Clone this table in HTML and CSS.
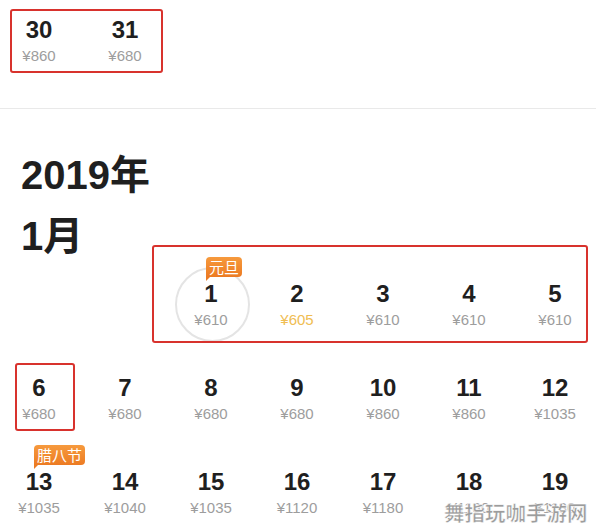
FILE: index.html
```html
<!DOCTYPE html>
<html lang="zh-CN">
<head>
    <meta charset="UTF-8">
    <meta name="viewport" content="width=device-width, initial-scale=1.0">
    <title>价格日历</title>
    <link rel="stylesheet" href="styles.css">
</head>
<body>
    <div class="page">
        <div class="bg-digit">1</div>

        <div class="days days-prev">
            <div class="day"><div class="tag-slot"></div><div class="num">30</div><div class="price">¥860</div></div>
            <div class="day"><div class="tag-slot"></div><div class="num">31</div><div class="price">¥680</div></div>
        </div>

        <div class="divider"></div>

        <div class="month">
            <h2 class="month-title">2019年<br>1月</h2>
            <div class="days">
                <div class="day empty"></div>
                <div class="day empty"></div>
                <div class="day today">
                    <div class="tag-slot"><span class="tag">元旦</span></div>
                    <div class="body"><div class="num">1</div><div class="price">¥610</div></div>
                </div>
                <div class="day"><div class="tag-slot"></div><div class="num">2</div><div class="price low">¥605</div></div>
                <div class="day"><div class="tag-slot"></div><div class="num">3</div><div class="price">¥610</div></div>
                <div class="day"><div class="tag-slot"></div><div class="num">4</div><div class="price">¥610</div></div>
                <div class="day"><div class="tag-slot"></div><div class="num">5</div><div class="price">¥610</div></div>

                <div class="day"><div class="tag-slot"></div><div class="num">6</div><div class="price">¥680</div></div>
                <div class="day"><div class="tag-slot"></div><div class="num">7</div><div class="price">¥680</div></div>
                <div class="day"><div class="tag-slot"></div><div class="num">8</div><div class="price">¥680</div></div>
                <div class="day"><div class="tag-slot"></div><div class="num">9</div><div class="price">¥680</div></div>
                <div class="day"><div class="tag-slot"></div><div class="num">10</div><div class="price">¥860</div></div>
                <div class="day"><div class="tag-slot"></div><div class="num">11</div><div class="price">¥860</div></div>
                <div class="day"><div class="tag-slot"></div><div class="num">12</div><div class="price">¥1035</div></div>

                <div class="day"><div class="tag-slot"><span class="tag">腊八节</span></div><div class="num">13</div><div class="price">¥1035</div></div>
                <div class="day"><div class="tag-slot"></div><div class="num">14</div><div class="price">¥1040</div></div>
                <div class="day"><div class="tag-slot"></div><div class="num">15</div><div class="price">¥1035</div></div>
                <div class="day"><div class="tag-slot"></div><div class="num">16</div><div class="price">¥1120</div></div>
                <div class="day"><div class="tag-slot"></div><div class="num">17</div><div class="price">¥1180</div></div>
                <div class="day"><div class="tag-slot"></div><div class="num">18</div><div class="price">¥1180</div></div>
                <div class="day"><div class="tag-slot"></div><div class="num">19</div><div class="price">¥1180</div></div>
            </div>
        </div>

        <!-- red annotation boxes -->
        <div class="mark mark-prev"></div>
        <div class="mark mark-week"></div>
        <div class="mark mark-six"></div>

        <div class="watermark">舞指玩咖手游网</div>
    </div>
</body>
</html>
```

FILE: styles.css
```css
html, body {
    margin: 0;
    background: #fff;
}
body {
    font-family: "Liberation Sans", "Noto Sans CJK SC", sans-serif;
    color: #222;
    overflow: hidden;
}
.page {
    position: relative;
    width: 596px;
    height: 531px;
    overflow: hidden;
}
.days {
    display: grid;
    grid-template-columns: repeat(7, 86px);
    row-gap: 21px;
    margin-left: -4px;
}
.days-prev {
    margin-top: -7px;
}
.day {
    text-align: center;
}
.tag-slot {
    height: 20px;
    margin-bottom: 2px;
    padding-left: calc(50% - 5px);
    text-align: left;
    white-space: nowrap;
}
.num {
    font-size: 24px;
    font-weight: bold;
    line-height: 30px;
    color: #1f1f1f;
}
.price {
    margin-top: 1px;
    font-size: 15px;
    line-height: 20px;
    color: #9d9d9d;
}
.price.low {
    color: #f0bd52;
}
.tag {
    position: relative;
    z-index: 1;
    display: inline-block;
    height: 20px;
    padding: 0 3px;
    font-family: "Noto Sans CJK SC", sans-serif;
    font-size: 15px;
    line-height: 20px;
    color: #fff;
    background: linear-gradient(#f69a3d, #ec7b23);
    border-radius: 4px 4px 4px 0;
}
.tag::after {
    content: "";
    position: absolute;
    left: 0;
    top: 100%;
    border-left: 4px solid #ec7b23;
    border-bottom: 4px solid transparent;
}
.today .body {
    position: relative;
}
.today .body::before {
    content: "";
    position: absolute;
    left: 50%;
    top: 50%;
    width: 71px;
    height: 71px;
    margin: -38px 0 0 -36px;
    border: 2px solid #e4e4e4;
    border-radius: 50%;
}
.divider {
    margin-top: 42px;
    border-top: 1px solid #e9e9e9;
}
.month-title {
    margin: 36px 0 -10px 21px;
    font-size: 40px;
    line-height: 61px;
    font-weight: bold;
    color: #1f1f1f;
}
.bg-digit {
    position: absolute;
    z-index: -1;
    left: 224px;
    top: 335px;
    font-size: 280px;
    font-weight: bold;
    line-height: 1;
    color: #f4f4f4;
}
.mark {
    position: absolute;
    border: 2px solid #d8322d;
    border-radius: 3px;
}
.mark-prev {
    left: 10px;
    top: 9px;
    width: 149px;
    height: 60px;
}
.mark-week {
    left: 152px;
    top: 245px;
    width: 432px;
    height: 94px;
}
.mark-six {
    left: 15px;
    top: 363px;
    width: 56px;
    height: 64px;
}
.watermark {
    position: absolute;
    left: 444px;
    top: 499px;
    font-family: "Noto Sans CJK SC", sans-serif;
    font-size: 20.5px;
    font-weight: bold;
    line-height: 26px;
    color: #9c9c9c;
    -webkit-text-stroke: 0.5px #fff;
    text-shadow: 0 0 2px #fff;
}
```
